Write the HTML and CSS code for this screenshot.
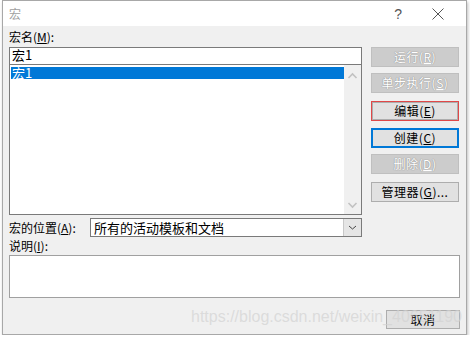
FILE: index.html
```html
<!DOCTYPE html>
<html lang="zh-CN">
<head>
    <meta charset="UTF-8">
    <title>宏</title>
    <link rel="stylesheet" href="styles.css">
</head>
<body>
    <div class="window">
        <div class="title-bar">
            <span class="title">宏</span>
            <span class="help">?</span>
            <svg class="close" width="12" height="12" viewBox="0 0 12 12">
                <path d="M0.5 0.5 L11.5 11.5 M11.5 0.5 L0.5 11.5" stroke="#555" stroke-width="1" fill="none"/>
            </svg>
        </div>
        <div class="content">
            <div class="main-row">
                <div class="left-col">
                    <div class="label">宏名(<u>M</u>):</div>
                    <div class="name-input">宏1</div>
                    <div class="macro-list">
                        <div class="list-items">
                            <div class="list-item selected">宏1</div>
                        </div>
                        <div class="scrollbar">
                            <svg width="17" height="10" viewBox="0 0 17 10"><path d="M4.5 7 L8.5 3 L12.5 7" stroke="#c2c2c2" stroke-width="1.6" fill="none"/></svg>
                            <svg width="17" height="10" viewBox="0 0 17 10"><path d="M4.5 3 L8.5 7 L12.5 3" stroke="#c2c2c2" stroke-width="1.6" fill="none"/></svg>
                        </div>
                    </div>
                </div>
                <div class="right-col">
                    <button class="btn disabled">运行(<u>R</u>)</button>
                    <button class="btn disabled">单步执行(<u>S</u>)</button>
                    <button class="btn marked">编辑(<u>E</u>)</button>
                    <button class="btn focused">创建(<u>C</u>)</button>
                    <button class="btn disabled">删除(<u>D</u>)</button>
                    <button class="btn">管理器(<u>G</u>)...</button>
                </div>
            </div>
            <div class="location-row">
                <span class="label">宏的位置(<u>A</u>):</span>
                <div class="combo">
                    <span class="combo-text">所有的活动模板和文档</span>
                    <span class="combo-btn">
                        <svg width="17" height="17" viewBox="0 0 17 17"><path d="M5 7 L8.5 10 L12 7" stroke="#444" stroke-width="1" fill="none"/></svg>
                    </span>
                </div>
            </div>
            <div class="label desc-label">说明(<u>I</u>):</div>
            <div class="desc-box"></div>
            <div class="bottom-row">
                <button class="btn cancel">取消</button>
            </div>
        </div>
        <div class="watermark">https://blog.csdn.net/weixin_40651190</div>
    </div>
</body>
</html>
```

FILE: styles.css
```css
body {
    margin: 0;
    background-color: #ffffff;
    font-family: "Noto Sans CJK SC", "Liberation Sans", sans-serif;
    font-size: 12px;
    color: #000000;
}
.window {
    position: relative;
    box-sizing: border-box;
    width: 465px;
    height: 335px;
    margin-left: 2px;
    border: 1px solid #a8a8a8;
    background-color: #f0f0f0;
    box-shadow: 1px 2px 3px rgba(0, 0, 0, 0.25);
}
.title-bar {
    display: flex;
    align-items: center;
    height: 25px;
    background-color: #ffffff;
}
.title {
    margin-left: 6px;
    color: #a0a0a0;
    flex: 1;
}
.help {
    font-family: "Liberation Sans", sans-serif;
    font-size: 14px;
    color: #555;
    margin-right: 30px;
}
.close {
    margin-right: 22px;
}
.content {
    padding: 0 5px 0 6px;
}
.main-row {
    display: flex;
    gap: 9px;
}
.left-col {
    width: 353px;
}
.label {
    height: 21px;
    line-height: 22px;
}
.name-input {
    box-sizing: border-box;
    height: 17px;
    line-height: 14px;
    padding-left: 2px;
    border: 1px solid #7a7a7a;
    border-bottom: none;
    background-color: #ffffff;
    font-size: 13px;
}
.macro-list {
    box-sizing: border-box;
    display: flex;
    height: 151px;
    border: 1px solid #7a7a7a;
    background-color: #ffffff;
}
.list-items {
    flex: 1;
    padding: 2px 0 0 1px;
}
.list-item {
    height: 12px;
    line-height: 12px;
    padding-left: 1px;
    font-size: 13px;
}
.list-item.selected {
    background-color: #0078d7;
    color: #ffffff;
}
.scrollbar {
    width: 17px;
    background-color: #f0f0f0;
    display: flex;
    flex-direction: column;
    justify-content: space-between;
    padding: 6px 0 4px;
}
.right-col {
    display: flex;
    flex-direction: column;
    padding-top: 21px;
}
.btn {
    box-sizing: border-box;
    width: 88px;
    height: 20px;
    padding: 0;
    margin-bottom: 6px;
    border: 1px solid #adadad;
    background-color: #e1e1e1;
    font-family: "Noto Sans CJK SC", "Liberation Sans", sans-serif;
    font-size: 12px;
    line-height: 16px;
    color: #000000;
    letter-spacing: 0.5px;
}
.btn.disabled {
    background-color: #cccccc;
    border-color: #bfbfbf;
    color: #ffffff;
    text-shadow: 0 0 1px #8f8f8f, 0 0 1px #8f8f8f;
}
.btn.marked {
    margin-top: 2px;
    border: 1px solid #e04848;
    box-shadow: inset 0 0 0 1px #adadad;
}
.btn.focused {
    margin-top: 1px;
    border: 2px solid #0078d7;
}
.btn:nth-child(6) {
    margin-top: 2px;
}
.location-row {
    display: flex;
    align-items: center;
    margin-top: 3px;
    height: 19px;
}
.location-row .label {
    width: 81px;
    height: 19px;
    line-height: 19px;
}
.combo {
    box-sizing: border-box;
    display: flex;
    width: 272px;
    height: 19px;
    border: 1px solid #7a7a7a;
    background-color: #ffffff;
}
.combo-text {
    flex: 1;
    padding-left: 3px;
    line-height: 17px;
    font-size: 13px;
}
.combo-btn {
    width: 17px;
    background-color: #e5e5e5;
    border-left: 1px solid #c8c8c8;
}
.desc-label {
    height: 18px;
    line-height: 18px;
}
.desc-box {
    box-sizing: border-box;
    width: 451px;
    height: 43px;
    border: 1px solid #a0a0a0;
    background-color: #ffffff;
}
.bottom-row {
    display: flex;
    justify-content: flex-end;
    padding-top: 12px;
    padding-right: 1px;
}
.btn.cancel {
    width: 74px;
    height: 19px;
    margin: 0;
}
.watermark {
    position: absolute;
    left: 188px;
    top: 307px;
    font-family: "Liberation Sans", sans-serif;
    font-size: 16px;
    color: rgba(210, 210, 210, 0.7);
    white-space: nowrap;
    pointer-events: none;
}
```
